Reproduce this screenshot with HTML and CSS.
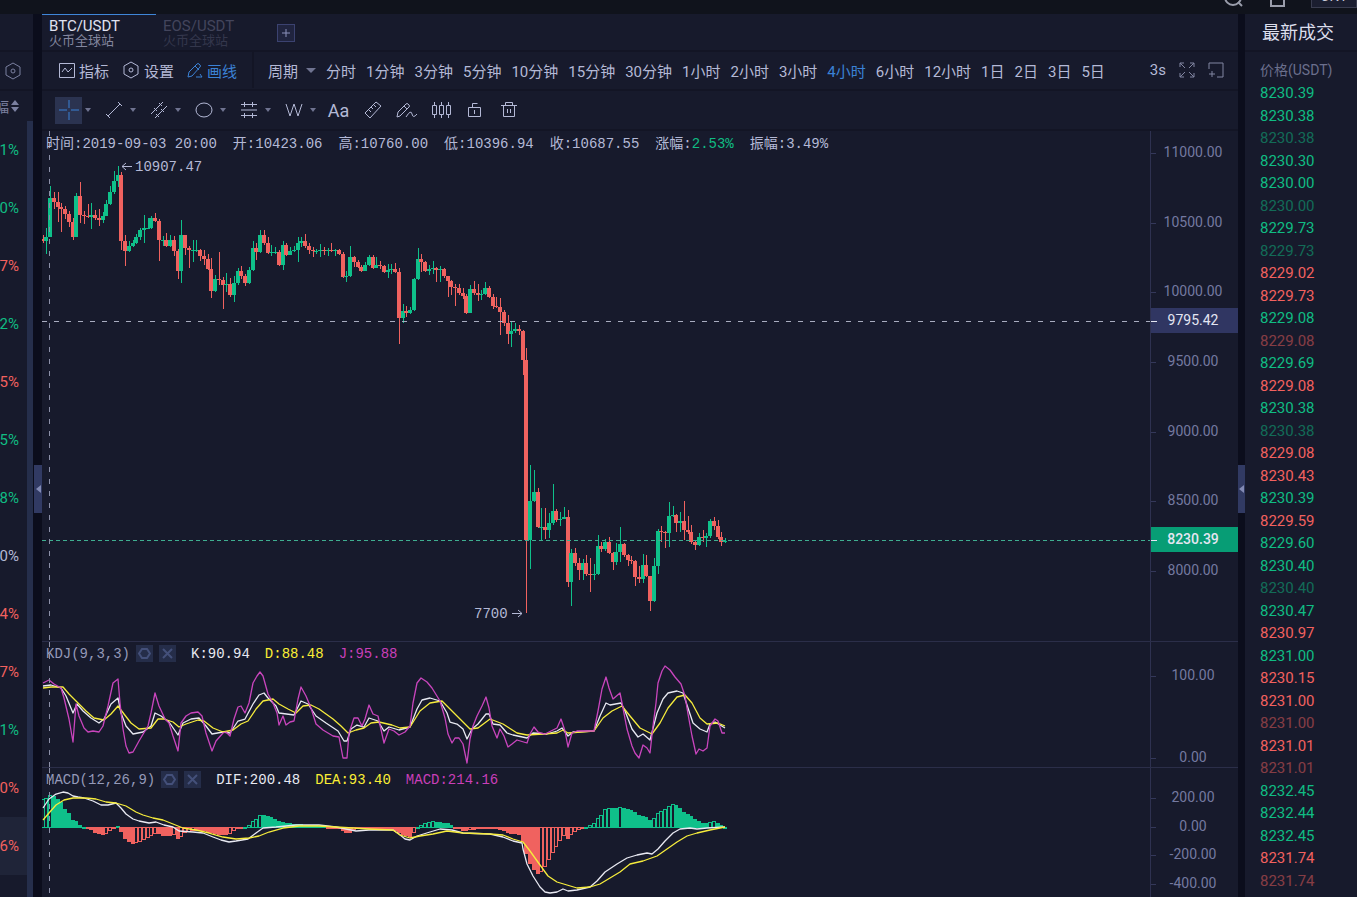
FILE: index.html
```html
<!DOCTYPE html>
<html lang="zh-CN">
  <head>
    <meta charset="UTF-8" />
    <meta name="viewport" content="width=device-width, initial-scale=1.0" />
    <title>BTC/USDT 火币全球站</title>
    <link rel="stylesheet" href="styles.css">
  </head>
  <body>
    <header class="topbar">
      <button class="top_btn" aria-label="搜索">
        <svg width="20" height="20" viewBox="0 0 20 20"><circle cx="10" cy="10" r="8" /><path d="M15 15l4 4" /></svg>
      </button>
      <button class="top_btn" aria-label="手机">
        <svg width="20" height="20" viewBox="0 0 20 20"><path d="M4 1h13v18H4z" /></svg>
      </button>
      <button class="currency">CNY</button>
    </header>

    <div class="page">
      <aside class="market">
        <div class="market_head"></div>
        <div class="market_set">
          <button class="icon_btn" aria-label="设置">
            <svg width="18" height="18" viewBox="0 0 18 18"><path d="M9 1l7 4v8l-7 4-7-4V5z" /><circle cx="9" cy="9" r="2" /></svg>
          </button>
        </div>
        <div class="market_sort"><span>幅</span><svg width="8" height="12" viewBox="0 0 8 12"><path class="fill" d="M4 0l4 5H0zM4 12L0 7h8z" /></svg></div>
        <ul class="market_list">
          <li class="up">1%</li>
          <li class="up">0%</li>
          <li class="down">7%</li>
          <li class="up">2%</li>
          <li class="down">5%</li>
          <li class="up">5%</li>
          <li class="up">8%</li>
          <li>0%</li>
          <li class="down">4%</li>
          <li class="down">7%</li>
          <li class="up">1%</li>
          <li class="down">0%</li>
          <li class="down -on">6%</li>
        </ul>
      </aside>

      <div class="gutter -left">
        <button class="handle" aria-label="收起左侧"><svg width="5" height="8" viewBox="0 0 5 8"><path class="fill" d="M5 0v8L0 4z" /></svg></button>
      </div>

      <main class="center">
        <nav class="tabs">
          <a href="#" class="tab -on"><b>BTC/USDT</b><span>火币全球站</span></a>
          <a href="#" class="tab"><b>EOS/USDT</b><span>火币全球站</span></a>
          <button class="add" aria-label="添加"><svg width="10" height="10" viewBox="0 0 10 10"><path d="M5 1v8M1 5h8" /></svg></button>
        </nav>

        <div class="toolbar">
          <div class="tool_main">
            <button class="tool"><svg width="16" height="16" viewBox="0 0 16 16"><path d="M.5 1.5h15v14H.5zM3 10l3-4 3 4 4-4" /></svg>指标</button>
            <button class="tool"><svg width="18" height="18" viewBox="0 0 18 18"><path d="M9 1l7 4v8l-7 4-7-4V5z" /><circle cx="9" cy="9" r="2" /></svg>设置</button>
            <button class="tool -on"><svg width="16" height="16" viewBox="0 0 16 16"><path d="M1 15l1-5 8-8q1-1 2 0l1 1q1 1 0 2l-8 9zM8 4l4 4M9 15h6l-2-3" /></svg>画线</button>
          </div>
          <div class="periods">
            <button class="period -more">周期<i class="caret -big"></i></button>
            <button class="period">分时</button>
            <button class="period">1分钟</button>
            <button class="period">3分钟</button>
            <button class="period">5分钟</button>
            <button class="period">10分钟</button>
            <button class="period">15分钟</button>
            <button class="period">30分钟</button>
            <button class="period">1小时</button>
            <button class="period">2小时</button>
            <button class="period">3小时</button>
            <button class="period -on">4小时</button>
            <button class="period">6小时</button>
            <button class="period">12小时</button>
            <button class="period">1日</button>
            <button class="period">2日</button>
            <button class="period">3日</button>
            <button class="period">5日</button>
          </div>
          <div class="tool_end">
            <span>3s</span>
            <button class="icon_btn" aria-label="全屏"><svg width="16" height="16" viewBox="0 0 16 16"><path d="M1 5V1h4M1 1l5 5M11 1h4v4M15 1l-5 5M1 11v4h4M1 15l5-5M15 11v4h-4M15 15l-5-5" /></svg></button>
            <button class="icon_btn" aria-label="新窗口"><svg width="16" height="16" viewBox="0 0 16 16"><path d="M1 7V1h14v14H9M4 9v6M1 12h6" /></svg></button>
          </div>
        </div>

        <div class="drawbar">
          <div class="draw_group">
            <button class="draw -on" aria-label="十字线"><svg width="20" height="20" viewBox="0 0 20 20"><path class="blue" d="M0 10h8M12 10h8M10 0v8M10 12v8" /></svg></button><i class="caret"></i>
          </div>
          <div class="draw_group">
            <button class="draw" aria-label="线段"><svg width="18" height="18" viewBox="0 0 18 18"><path d="M3 15L15 3M1 13l4 4M13 1l4 4" /></svg></button><i class="caret"></i>
          </div>
          <div class="draw_group">
            <button class="draw" aria-label="平行线"><svg width="18" height="18" viewBox="0 0 18 18"><path d="M1 13L13 1M5 17L17 5M4 7l3 3M9 2l3 3M6 13l3 3M11 8l3 3" /></svg></button><i class="caret"></i>
          </div>
          <div class="draw_group">
            <button class="draw" aria-label="椭圆"><svg width="18" height="18" viewBox="0 0 18 18"><ellipse cx="9" cy="9" rx="8" ry="7" /></svg></button><i class="caret"></i>
          </div>
          <div class="draw_group">
            <button class="draw" aria-label="斐波那契"><svg width="18" height="18" viewBox="0 0 18 18"><path d="M1 3.500h16M1 9h16M1 14.500h16M12.500 1v5M4.500 12v5M12.500 12v5M4.500 1v5" /></svg></button><i class="caret"></i>
          </div>
          <div class="draw_group">
            <button class="draw" aria-label="波浪"><svg width="18" height="18" viewBox="0 0 18 18"><path d="M1 3l4 12 4-12 4 12 4-12" /></svg></button><i class="caret"></i>
          </div>
          <button class="draw">Aa</button>
          <button class="draw" aria-label="测量"><svg width="18" height="18" viewBox="0 0 18 18"><path d="M1 12L12 1l5 4L6 17zM7 6l2 2M10 4l2 2M5 9l2 2" /></svg></button>
          <button class="draw" aria-label="画笔"><svg width="22" height="18" viewBox="0 0 22 18"><path d="M1 16l1-5 8-8q1-1 2 0l1 1q1 1 0 2l-9 9zM8 5l3 3M10 16q5-8 6-3t5 0" /></svg></button>
          <button class="draw" aria-label="K线"><svg width="20" height="18" viewBox="0 0 20 18"><path d="M1.500 4.500h4v9h-4zM8.500 4.500h4v9h-4zM15.500 4.500h4v9h-4zM3.500 1v3.500M3.500 13.500V17M10.500 1v3.500M10.500 13.500V17M17.500 1v3.500M17.500 13.500V17" /></svg></button>
          <button class="draw" aria-label="锁定"><svg width="16" height="18" viewBox="0 0 16 18"><path d="M1.500 6.500h12v9h-12zM5.500 6.500v-4h5M7.500 9v4" /></svg></button>
          <button class="draw" aria-label="删除"><svg width="18" height="18" viewBox="0 0 18 18"><path d="M1 4.500h16M3.500 4.500v11h11v-11M5.500 4.500v-3h7v3M7.500 8v4M10.500 8v4" /></svg></button>
        </div>

        <div class="chart">
          <section class="pane -price">
            <div class="plot">
              <svg class="canvas" id="price_plot"></svg>
              <p class="legend">
                <span>时间:2019-09-03 20:00</span>
                <span>开:10423.06</span>
                <span>高:10760.00</span>
                <span>低:10396.94</span>
                <span>收:10687.55</span>
                <span>涨幅:<em class="up">2.53%</em></span>
                <span>振幅:3.49%</span>
              </p>
            </div>
            <div class="axis"><svg class="canvas" id="price_axis"></svg></div>
          </section>
          <section class="pane -kdj">
            <div class="plot">
              <svg class="canvas" id="kdj_plot"></svg>
              <div class="legend">
                <span class="name">KDJ(9,3,3)
                  <button class="mini" aria-label="设置"><svg width="13" height="13" viewBox="0 0 13 13"><path d="M4 2h5l3 4.500L9 11H4L1 6.500z" /></svg></button>
                  <button class="mini" aria-label="关闭"><svg width="13" height="13" viewBox="0 0 13 13"><path d="M2 2l9 9M11 2l-9 9" /></svg></button>
                </span>
                <span class="white">K:90.94</span>
                <span class="yellow">D:88.48</span>
                <span class="pink">J:95.88</span>
              </div>
            </div>
            <div class="axis"><svg class="canvas" id="kdj_axis"></svg></div>
          </section>
          <section class="pane -macd">
            <div class="plot">
              <svg class="canvas" id="macd_plot"></svg>
              <div class="legend">
                <span class="name">MACD(12,26,9)
                  <button class="mini" aria-label="设置"><svg width="13" height="13" viewBox="0 0 13 13"><path d="M4 2h5l3 4.500L9 11H4L1 6.500z" /></svg></button>
                  <button class="mini" aria-label="关闭"><svg width="13" height="13" viewBox="0 0 13 13"><path d="M2 2l9 9M11 2l-9 9" /></svg></button>
                </span>
                <span class="white">DIF:200.48</span>
                <span class="yellow">DEA:93.40</span>
                <span class="pink">MACD:214.16</span>
              </div>
            </div>
            <div class="axis"><svg class="canvas" id="macd_axis"></svg></div>
          </section>
        </div>
      </main>

      <div class="gutter">
        <button class="handle" aria-label="收起右侧"><svg width="5" height="8" viewBox="0 0 5 8"><path class="fill" d="M5 0v8L0 4z" /></svg></button>
      </div>

      <aside class="trades">
        <h2 class="trades_title">最新成交</h2>
        <div class="trades_head">价格(USDT)</div>
        <ul class="trades_list">
          <li class="up">8230.39</li>
          <li class="up">8230.38</li>
          <li class="up -dim">8230.38</li>
          <li class="up">8230.30</li>
          <li class="up">8230.00</li>
          <li class="up -dim">8230.00</li>
          <li class="up">8229.73</li>
          <li class="up -dim">8229.73</li>
          <li class="down">8229.02</li>
          <li class="down">8229.73</li>
          <li class="up">8229.08</li>
          <li class="down -dim">8229.08</li>
          <li class="up">8229.69</li>
          <li class="down">8229.08</li>
          <li class="up">8230.38</li>
          <li class="up -dim">8230.38</li>
          <li class="down">8229.08</li>
          <li class="down">8230.43</li>
          <li class="up">8230.39</li>
          <li class="down">8229.59</li>
          <li class="up">8229.60</li>
          <li class="up">8230.40</li>
          <li class="up -dim">8230.40</li>
          <li class="up">8230.47</li>
          <li class="down">8230.97</li>
          <li class="up">8231.00</li>
          <li class="down">8230.15</li>
          <li class="down">8231.00</li>
          <li class="down -dim">8231.00</li>
          <li class="down">8231.01</li>
          <li class="down -dim">8231.01</li>
          <li class="up">8232.45</li>
          <li class="up">8232.44</li>
          <li class="up">8232.45</li>
          <li class="down">8231.74</li>
          <li class="down -dim">8231.74</li>
        </ul>
      </aside>
    </div>
    <script src="chart.js"></script>
  </body>
</html>
```
FILE: styles.css
```css
* {
  box-sizing: border-box;
}
body {
  margin: 0;
  height: 100vh;
  overflow: hidden;
  display: flex;
  flex-direction: column;
  background: #0b0d1c;
  color: #b4b9d6;
  font-family: Roboto, "Noto Sans CJK SC", sans-serif;
  font-size: 15px;
}
button {
  padding: 0;
  border: 0;
  background: none;
  color: inherit;
  font: inherit;
  display: flex;
  align-items: center;
  justify-content: center;
}
a {
  color: inherit;
  text-decoration: none;
}
ul,
p,
h2 {
  margin: 0;
  padding: 0;
  list-style: none;
}
svg {
  fill: none;
  stroke: currentColor;
  flex-shrink: 0;
}
.fill {
  fill: currentColor;
  stroke: none;
}
.up {
  color: #10bc83;
}
.down {
  color: #f2615f;
}
.-dim {
  opacity: 0.5;
}

/* top bar */
.topbar {
  height: 14px;
  flex-shrink: 0;
  overflow: hidden;
  display: flex;
  justify-content: flex-end;
  align-items: flex-end;
  padding-bottom: 6px;
  background: #10131c;
}
.top_btn {
  width: 20px;
  margin-right: 24px;
  margin-bottom: 1px;
  color: #9a9dab;
  stroke-width: 2;
}
.currency {
  width: 46px;
  height: 24px;
  border: 1px solid #3a3d50;
  background: #1b1e30;
  font-size: 14px;
  color: #c9ccda;
}

.page {
  flex: 1;
  min-height: 0;
  display: flex;
}

/* left market list */
.market {
  width: 33px;
  flex-shrink: 0;
  overflow: hidden;
  background: #171a2c;
  display: flex;
  flex-direction: column;
}
.market_head {
  height: 38px;
  border-bottom: 2px solid #131525;
}
.market_set {
  height: 39px;
  border-bottom: 2px solid #131525;
  display: flex;
  align-items: center;
  padding-left: 4px;
  color: #7b80a0;
}
.market_sort {
  height: 30px;
  flex-shrink: 0;
  display: flex;
  justify-content: flex-end;
  align-items: center;
  gap: 2px;
  padding-right: 14px;
  font-size: 14px;
  color: #7b80a0;
}
.market_list {
  flex: 1;
  border-right: 6px solid #252e4b;
}
.market_list li {
  height: 58px;
  line-height: 58px;
  padding-right: 8px;
  display: flex;
  justify-content: flex-end;
}
.market_list li.-on {
  background: #1f2438;
}

.gutter {
  width: 7px;
  flex-shrink: 0;
  display: flex;
  align-items: center;
  padding-top: 66px;
}
.gutter.-left {
  width: 8px;
  margin-left: 1px;
}
.handle {
  width: 100%;
  height: 48px;
  background: #313a63;
  color: #838bb5;
}

/* center */
.center {
  flex: 1;
  min-width: 0;
  display: flex;
  flex-direction: column;
  background: #171a2c;
}
.tabs {
  height: 38px;
  flex-shrink: 0;
  display: flex;
  border-bottom: 2px solid #131525;
}
.tab {
  width: 114px;
  padding: 4px 7px 0;
  border-top: 1px solid transparent;
  color: #43455c;
}
.tab b,
.tab span {
  display: block;
  font-weight: 400;
  line-height: 15px;
}
.tab span {
  font-size: 13px;
  line-height: 14px;
  color: #34374c;
}
.tab.-on {
  border-top-color: #3f86d8;
  color: #e0e2f0;
}
.tab.-on span {
  color: #83869f;
}
.add {
  width: 18px;
  height: 18px;
  margin: 10px 0 0 7px;
  border: 1px solid #3b4270;
  background: #20243f;
  color: #8c92bd;
}

.toolbar {
  height: 39px;
  flex-shrink: 0;
  display: flex;
  padding-bottom: 1px;
  border-bottom: 2px solid #131525;
  white-space: nowrap;
}
.tool_main,
.periods,
.tool_end {
  display: flex;
  align-items: center;
}
.tool_main {
  gap: 13px;
  padding: 0 15px 0 17px;
  border-right: 2px solid #131525;
}
.tool {
  gap: 4px;
}
.tool.-on,
.period.-on {
  color: #3b82d6;
}
.periods {
  gap: 10px;
  padding-left: 14px;
}
.tool_end {
  margin-left: auto;
  gap: 13px;
  padding-right: 14px;
}
.tool_end svg {
  color: #8286a2;
}
.caret {
  border: 3px solid transparent;
  border-top: 4px solid #6f7390;
  border-bottom: 0;
}
.caret.-big {
  border-width: 5px 5px 0;
  margin-left: 8px;
}

.drawbar {
  height: 40px;
  flex-shrink: 0;
  display: flex;
  align-items: center;
  gap: 9px;
  padding-left: 13px;
  border-bottom: 2px solid #131525;
}
.draw_group {
  width: 36px;
  display: flex;
  align-items: center;
  gap: 3px;
}
.draw {
  width: 27px;
  height: 27px;
  font-size: 18px;
}
.draw.-on {
  background: #2b3350;
}
.blue {
  stroke: #3b82d6;
}
.draw + .draw {
  margin-left: -2px;
}

/* chart */
.chart {
  flex: 1;
  min-height: 0;
  display: flex;
  flex-direction: column;
}
.pane {
  min-height: 0;
  display: flex;
  border-top: 1px solid #2b2e49;
}
.pane.-price {
  flex: 509 1 0;
  border-top: 0;
}
.pane.-kdj {
  flex: 125 1 0;
}
.pane.-macd {
  flex: 129 1 0;
}
.plot {
  flex: 1;
  position: relative;
}
.axis {
  width: 88px;
  border-left: 1px solid #2e3150;
}
.canvas {
  display: block;
  width: 100%;
  height: 100%;
}
.legend {
  position: absolute;
  left: 4px;
  top: 4px;
  display: flex;
  gap: 16px;
  font: 14px/18px "Liberation Mono", "Noto Sans CJK SC", monospace;
  white-space: nowrap;
}
div.legend {
  top: 3px;
  gap: 15px;
}
.legend em {
  font-style: normal;
}
.legend .name {
  display: flex;
  gap: 6px;
  color: #9499b8;
}
.mini {
  width: 17px;
  height: 17px;
  background: #252d49;
  color: #44507a;
  stroke-width: 2;
}
.white {
  color: #e8e9f2;
}
.yellow {
  color: #fbee35;
}
.pink {
  color: #c93fb9;
}
.axis_text {
  fill: #7479a0;
  stroke: none;
  font-size: 14px;
  text-anchor: middle;
}
.axis_text.-tag {
  fill: #e4e6f2;
}
.axis_text.-now {
  font-weight: 500;
}
.mark {
  fill: #b4b9d6;
  stroke: none;
  font: 14px "Liberation Mono", monospace;
}

/* right trades */
.trades {
  width: 112px;
  flex-shrink: 0;
  background: #171a2c;
  display: flex;
  flex-direction: column;
}
.trades_title {
  height: 38px;
  padding-left: 17px;
  border-bottom: 2px solid #131525;
  font-size: 18px;
  font-weight: 400;
  line-height: 38px;
  color: #dcdeec;
}
.trades_head {
  height: 30px;
  padding-left: 15px;
  font-size: 14px;
  line-height: 36px;
  color: #6b6f8c;
}
.trades_list {
  flex: 1;
  display: flex;
  flex-direction: column;
  padding: 0 0 5px 15px;
}
.trades_list li {
  flex: 1;
  display: flex;
  align-items: center;
}
```
FILE: chart.js
```js
var NS = "http://www.w3.org/2000/svg";
var GREEN = "#0fc08a";
var RED = "#f0625f";
var LEFT = 42; // 圖表左邊
var FIRST_X = 43;
var STEP = 3.75; // 每根K線的間距

// 每一組: 收, 高, 低 (開 = 前一根的收)
var candles = [
  [241,235,243],[237,228,254],[198,186,237],[202,192,209],[207,192,222],[209,203,232],[214,206,219],[222,211,227],[237,218,240],[196,193,237],
  [215,182,223],[216,211,224],[217,204,218],[215,203,229],[218,210,220],[220,209,226],[216,212,223],[204,200,216],[192,186,205],[181,171,194],
  [175,166,187],[241,172,250],[251,235,266],[246,241,252],[243,240,247],[237,234,244],[230,228,240],[228,215,243],[228,218,229],[218,216,229],
  [221,213,222],[240,219,261],[240,236,246],[246,233,247],[240,235,247],[251,236,256],[271,249,279],[235,220,283],[248,235,255],[250,246,268],
  [250,240,262],[250,240,252],[256,249,261],[259,250,265],[269,254,270],[291,258,298],[279,275,292],[280,252,285],[285,277,309],[284,273,292],
  [295,278,297],[283,276,302],[271,268,285],[276,266,279],[283,274,286],[270,267,284],[248,241,271],[252,243,260],[235,230,253],[243,230,245],
  [253,237,254],[252,245,256],[252,247,254],[265,250,266],[245,241,270],[255,243,256],[251,247,255],[250,246,252],[243,237,262],[241,237,247],
  [246,234,248],[250,243,254],[251,247,257],[251,249,254],[250,244,257],[251,247,255],[250,248,256],[251,243,252],[250,249,256],[254,249,255],
  [277,252,278],[276,271,282],[257,246,277],[262,256,267],[267,260,268],[271,265,272],[265,262,271],[257,255,266],[268,255,269],[265,257,268],
  [266,261,269],[272,265,273],[270,264,278],[269,264,274],[272,263,273],[318,268,344],[311,304,323],[313,306,317],[310,307,314],[279,278,311],
  [259,248,280],[262,254,272],[271,261,272],[269,265,275],[268,261,274],[270,267,282],[269,266,282],[276,268,278],[281,276,297],[287,280,295],
  [288,284,306],[293,284,295],[296,288,299],[313,294,314],[289,285,313],[293,281,295],[295,284,301],[294,290,300],[288,282,295],[297,286,298],
  [306,294,309],[307,297,308],[312,298,335],[323,310,326],[334,315,344],[331,322,347],[329,323,333],[331,325,335],[360,330,375],[540,348,613],
  [501,465,569],[492,470,502],[527,488,528],[527,508,540],[530,508,539],[523,513,538],[511,484,525],[520,509,522],[519,512,526],[517,507,519],
  [582,510,587],[553,549,606],[563,548,566],[570,558,580],[563,559,580],[574,555,576],[575,558,592],[574,564,580],[546,535,575],[549,542,552],
  [542,539,551],[553,537,554],[562,552,570],[552,543,565],[544,527,562],[555,543,557],[560,554,566],[561,556,564],[577,560,586],[579,566,583],
  [565,554,583],[576,555,577],[601,576,611],[566,558,602],[531,529,574],[532,526,542],[533,531,548],[516,502,547],[515,506,517],[523,514,532],
  [521,512,532],[530,501,540],[532,516,534],[542,525,544],[545,540,550],[537,533,546],[538,530,542],[536,533,547],[521,519,538],[526,517,530],
  [537,520,539],[542,532,546],[541,538,543]
];

var lineJ = "43,682 49,679 54,683 61,687 64,697 69,718 73,741 76,703 79,715 84,727 88,731 93,730 99,731 103,725 108,705 113,682 118,678 120,702 123,728 126,745 129,752 133,751 139,740 148,725 151,712 155,692 159,705 165,718 169,722 173,735 178,750 181,722 186,715 191,712 198,711 202,715 206,732 212,750 216,740 223,732 226,731 230,735 234,718 238,706 241,705 245,712 249,702 253,682 257,675 260,671 263,675 268,693 273,702 277,712 279,724 283,715 286,724 290,721 294,720 298,698 301,686 306,695 311,707 316,723 323,729 333,735 339,736 343,757 347,757 349,732 354,717 358,717 362,725 365,718 369,704 373,713 378,715 384,742 389,728 394,730 399,734 405,731 410,725 413,702 417,682 421,677 427,681 432,687 440,700 445,717 448,733 452,742 455,737 459,737 463,743 467,762 470,738 473,725 477,715 482,705 486,696 489,707 492,725 497,737 500,728 504,735 508,746 512,743 517,739 527,742 530,733 534,726 538,731 545,733 557,727 561,718 565,730 568,746 572,732 577,730 594,730 598,710 602,688 606,676 609,687 613,698 620,692 623,707 627,728 632,745 635,752 639,757 643,744 647,747 650,752 653,725 656,702 658,682 662,670 665,665 670,669 675,676 681,683 685,695 688,713 692,735 696,753 699,748 703,750 707,747 710,725 715,718 718,720 722,732 725,732";
var lineK = "43,685 51,684 61,687 66,695 73,712 77,703 83,710 91,717 99,722 104,718 111,703 118,697 121,712 126,725 133,733 143,731 151,725 155,712 161,715 169,721 178,734 183,722 191,718 199,717 206,725 212,733 223,731 230,732 238,720 245,718 253,703 259,694 264,692 268,697 276,705 279,712 294,714 301,700 308,703 316,715 326,722 338,730 344,740 347,740 351,728 357,724 364,726 369,717 378,720 384,730 389,726 399,729 410,726 417,708 422,699 430,697 440,700 447,712 450,721 457,723 463,728 467,738 472,728 478,723 486,713 489,713 493,723 500,724 507,732 513,734 527,737 533,732 547,733 557,730 562,727 568,735 573,731 594,730 600,715 606,702 610,704 621,702 625,710 632,728 638,736 643,733 650,739 657,712 663,698 668,692 677,690 683,692 688,707 693,722 700,728 707,731 710,723 715,721 725,727";
var lineD = "43,687 51,686 63,686 69,693 76,700 86,710 94,717 104,719 111,713 118,705 124,713 131,722 139,728 151,727 158,718 164,718 173,721 179,726 186,723 198,719 204,720 213,727 223,731 233,729 241,723 248,720 256,708 263,700 273,698 279,703 288,708 296,712 303,705 311,704 319,708 333,718 341,725 348,732 356,729 364,727 371,722 379,721 392,724 400,727 410,726 420,710 430,702 442,700 452,710 470,728 478,727 490,718 503,723 517,732 527,734 543,733 557,732 563,729 568,732 594,730 603,717 612,710 622,705 630,715 640,727 652,733 660,722 668,707 677,696 685,694 692,702 700,717 707,723 718,722 725,725";

var lineDif = "43,807 49,798 56,793 63,791 68,792 73,795 78,796 84,797 93,800 101,804 108,804 116,802 121,807 126,813 133,818 139,820 149,822 156,821 164,824 173,826 179,830 193,831 203,832 213,836 221,839 229,841 236,840 248,838 256,832 263,827 276,826 296,824 319,824 336,826 346,828 356,830 369,829 393,829 399,833 405,838 410,839 417,835 430,831 440,828 452,829 463,832 490,833 503,836 513,840 522,842 523,848 527,863 533,875 540,886 545,891 550,892 557,891 563,888 568,890 577,889 590,886 597,880 605,871 617,863 627,857 637,854 647,852 652,853 658,848 665,840 673,832 680,828 690,827 697,828 707,827 725,826";
var lineDea = "43,819 49,812 56,804 64,799 73,797 86,797 96,798 106,801 116,802 126,805 136,811 143,814 153,817 163,819 173,823 183,827 196,829 209,832 223,836 236,838 249,837 259,835 269,831 283,827 299,825 319,825 336,826 353,827 369,828 393,829 400,834 410,837 420,835 433,833 447,830 463,832 490,833 503,834 513,838 523,841 530,850 540,864 548,875 557,881 567,884 577,887 590,886 600,883 610,877 620,871 630,863 643,860 657,855 667,848 677,841 687,835 697,832 710,829 725,826";
var bars = "43,798 46,797 50,794 54,795 58,798 62,802 65,808 69,812 73,819 77,820 80,824 84,826 88,828 92,831 96,833 101,835 105,835 108,832 112,830 115,827 118,825 120,830 123,837 128,842 133,844 138,843 143,841 148,838 153,835 158,833 164,836 169,836 173,834 178,839 183,836 186,832 193,831 203,831 213,834 219,835 229,835 234,831 239,828 244,827 247,825 251,822 256,818 260,814 264,814 269,815 274,817 279,820 286,822 296,823 313,824 323,825 329,827 339,828 347,834 351,832 356,829 369,829 389,828 400,834 410,837 415,832 417,827 420,824 425,822 432,820 440,821 447,822 452,824 455,827 463,831 473,830 480,828 487,826 493,828 507,832 513,835 518,833 523,842 527,858 532,868 537,874 542,872 547,863 552,855 557,845 562,838 565,835 568,839 573,833 578,831 583,827 587,825 590,824 595,821 600,815 605,808 608,807 613,807 620,806 625,807 632,809 637,813 645,815 650,819 655,817 658,812 665,808 672,803 677,804 683,810 690,814 697,819 703,822 715,820 720,824 725,826";

function add(parent, tag, attrs, text) {
  var el = document.createElementNS(NS, tag);
  for (var key in attrs) {
    el.setAttribute(key, attrs[key]);
  }
  if (text) el.textContent = text;
  parent.appendChild(el);
  return el;
}

// 把座標移到每個區塊自己的左上角
function layer(id, left, top) {
  return add(document.getElementById(id), "g", { transform: "translate(" + -left + "," + -top + ")" });
}

function hline(g, y, color, dash) {
  add(g, "line", { x1: LEFT, x2: "110%", y1: y, y2: y, stroke: color, "stroke-dasharray": dash });
}

function cursor(g, top, bottom) {
  add(g, "line", { x1: 49.5, x2: 49.5, y1: top, y2: bottom, stroke: "#8c90a8", "stroke-dasharray": "5 7" });
}

function polyline(g, points, color) {
  add(g, "polyline", { points: points, stroke: color, "stroke-width": 1.3, "stroke-linejoin": "round" });
}

// K線
var price = layer("price_plot", LEFT, 131);
var open = 239;
candles.forEach(function (c, i) {
  var x = Math.floor(FIRST_X + i * STEP);
  var color = c[0] <= open ? GREEN : RED;
  add(price, "rect", { x: x, y: c[1], width: 1, height: c[2] - c[1], fill: color, stroke: "none" });
  add(price, "rect", {
    x: x - 2, y: Math.min(open, c[0]), width: 4,
    height: Math.max(Math.abs(open - c[0]), 1), fill: color, stroke: "none"
  });
  open = c[0];
});
hline(price, 321.5, "#a9adc0", "5 7");
hline(price, 540.5, "#3fae90", "4 3");
cursor(price, 131, 640);
add(price, "path", { d: "M132 166.500h-10M126 163l-4 3.500 4 3.500M512 613.500h10M518 610l4 3.500-4 3.500", stroke: "#b4b9d6" });
add(price, "text", { x: 135, y: 171, "class": "mark" }, "10907.47");
add(price, "text", { x: 474, y: 618, "class": "mark" }, "7700");

// KDJ
var kdj = layer("kdj_plot", LEFT, 641);
polyline(kdj, lineK, "#e8e9f2");
polyline(kdj, lineD, "#f6ec3c");
polyline(kdj, lineJ, "#c945bd");
cursor(kdj, 641, 766);

// MACD
var macd = layer("macd_plot", LEFT, 767);
var barPoints = bars.split(" ").map(function (p) {
  return p.split(",").map(Number);
});
function barY(x) {
  for (var i = 1; i < barPoints.length; i++) {
    var a = barPoints[i - 1];
    var b = barPoints[i];
    if (x <= b[0]) return a[1] + ((b[1] - a[1]) * (x - a[0])) / (b[0] - a[0]);
  }
  return 826;
}
var last = 827;
candles.forEach(function (c, i) {
  var x = Math.floor(FIRST_X + i * STEP);
  var y = Math.round(barY(x));
  var color = y < 827 ? GREEN : RED;
  var top = Math.min(y, 826);
  var height = Math.max(Math.abs(827 - y), 2);
  if (y < last) {
    // 比前一根高的畫空心
    add(macd, "rect", { x: x - 1.5, y: top + 0.5, width: 3, height: height - 1, stroke: color });
  } else {
    add(macd, "rect", { x: x - 2, y: top, width: 4, height: height, fill: color, stroke: "none" });
  }
  last = y;
});
polyline(macd, lineDif, "#e8e9f2");
polyline(macd, lineDea, "#f6ec3c");
cursor(macd, 767, 897);

// 右邊刻度: 文字, y
function axis(g, items) {
  items.forEach(function (item) {
    add(g, "line", { x1: 0, x2: 5, y1: item[1] + 1.5, y2: item[1] + 1.5, stroke: "#34385a" });
    add(g, "text", { x: 42, y: item[1] + 5, "class": "axis_text" }, item[0]);
  });
}
function tag(g, text, y, color, extra) {
  add(g, "rect", { x: -1, y: y - 12, width: 88, height: 25, fill: color, stroke: "none" });
  add(g, "line", { x1: 0, x2: 6, y1: y + 1.5, y2: y + 1.5, stroke: "#e4e6f2" });
  add(g, "text", { x: 42, y: y + 5, "class": "axis_text -tag " + extra }, text);
}
var priceAxis = layer("price_axis", 0, 131);
axis(priceAxis, [["11000.00", 152], ["10500.00", 222], ["10000.00", 291], ["9500.00", 361], ["9000.00", 431], ["8500.00", 500], ["8000.00", 570]]);
tag(priceAxis, "9795.42", 320, "#303662", "");
tag(priceAxis, "8230.39", 539, "#079d75", "-now");
axis(layer("kdj_axis", 0, 641), [["100.00", 674], ["0.00", 756]]);
axis(layer("macd_axis", 0, 767), [["200.00", 796], ["0.00", 825], ["-200.00", 853], ["-400.00", 882]]);
```
